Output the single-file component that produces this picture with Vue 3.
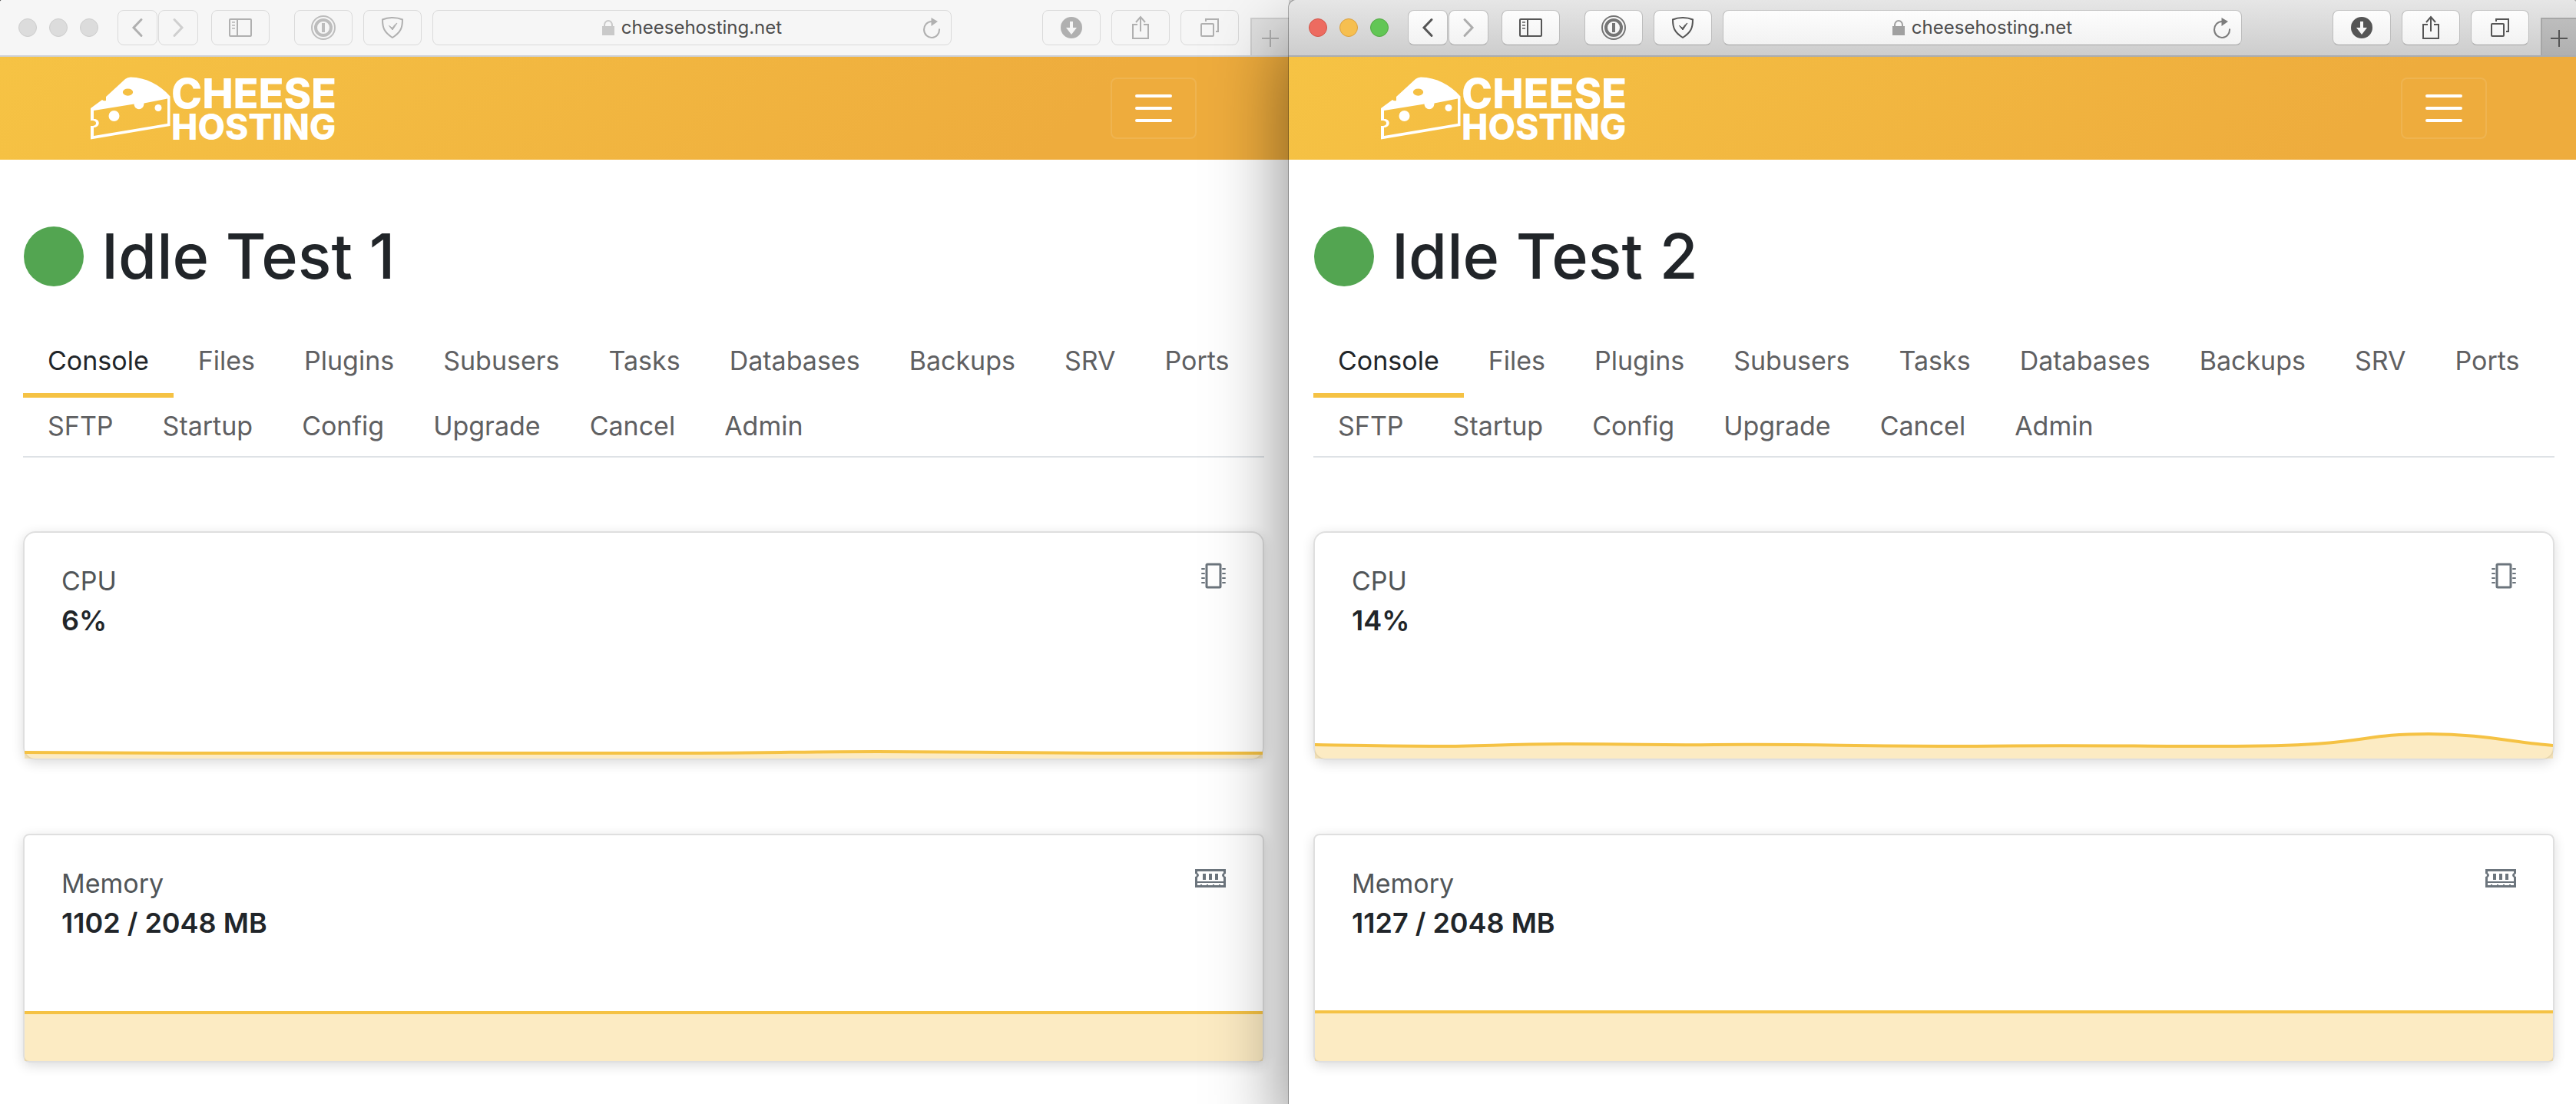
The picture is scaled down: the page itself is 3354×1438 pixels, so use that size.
<script setup>
const tabs = [
  'Console', 'Files', 'Plugins', 'Subusers', 'Tasks', 'Databases', 'Backups', 'SRV', 'Ports',
  'SFTP', 'Startup', 'Config', 'Upgrade', 'Cancel', 'Admin',
]

// Chart curves are drawn on a 1612 x 294 plot, the inside of a card
const windows = [
  {
    id: 'one',
    active: false,
    title: 'Idle Test 1',
    cpu: '6%',
    memory: '1102 / 2048 MB',
    cpuLine: 'M0 286 C60 286 120 287 200 287 H820 C960 287 1020 285 1110 285 C1220 285 1280 287 1400 287 H1612',
    memoryLine: 'M0 231 H1612',
  },
  {
    id: 'two',
    active: true,
    title: 'Idle Test 2',
    cpu: '14%',
    memory: '1127 / 2048 MB',
    cpuLine: 'M0 276 C60 277 110 278 160 278 C220 278 250 275 330 275 C430 275 440 277 520 276 C640 275 700 278 860 278 C980 276 1060 278 1180 278 C1380 278 1350 262 1450 262 C1520 262 1560 273 1612 277',
    memoryLine: 'M0 230 H1612',
  },
]
</script>

<template>
  <div class="desktop">
    <section v-for="w in windows" :key="w.id" class="window" :class="w.active ? 'front' : 'back'" :aria-label="w.title">
      <div class="toolbar">
        <div class="lights">
          <button class="light red" aria-label="Close"></button>
          <button class="light amber" aria-label="Minimise"></button>
          <button class="light green" aria-label="Zoom"></button>
        </div>
        <div class="history">
          <button class="tool narrow" aria-label="Back">
            <svg width="16" height="26" viewBox="0 0 16 26"><path d="M13 2.500 3 13l10 10.500" fill="none" stroke="currentColor" stroke-width="3" stroke-linecap="round" /></svg>
          </button>
          <button class="tool narrow forward" aria-label="Forward">
            <svg width="16" height="26" viewBox="0 0 16 26"><path d="M3 2.500 13 13 3 23.500" fill="none" stroke="currentColor" stroke-width="3" stroke-linecap="round" /></svg>
          </button>
        </div>
        <button class="tool sidebar" aria-label="Show sidebar">
          <svg width="30" height="24" viewBox="0 0 30 24" fill="none" stroke="currentColor" stroke-width="2">
            <rect x="1" y="1" width="28" height="22" rx="1" />
            <path d="M11 1v22" />
            <path d="M4 5h4M4 9h4M4 13h4" opacity=".7" />
          </svg>
        </button>
        <div class="extensions">
          <button class="tool" aria-label="Password manager">
            <svg class="keyring" width="32" height="32" viewBox="0 0 32 32" fill="none" stroke="currentColor">
              <circle cx="16" cy="16" r="15" stroke-width="2" />
              <circle cx="16" cy="16" r="10" stroke-width="4" />
              <path d="M16 10v12" stroke-width="4" />
            </svg>
          </button>
          <button class="tool" aria-label="Ad blocker">
            <svg width="28" height="28" viewBox="0 0 28 28" fill="none" stroke="currentColor" stroke-width="2">
              <path d="M14 1C9 1 5 1.800 1 3.500 1 14 3 20 14 27 25 20 27 14 27 3.500 23 1.800 19 1 14 1Z" />
              <path d="M9.500 11.500l4.500 5.500 6-9c-3 2-4.500 4-6 6.500z" fill="currentColor" stroke-width="1" />
            </svg>
          </button>
        </div>
        <div class="address">
          <a class="host" href="#">
            <svg width="16" height="20" viewBox="0 0 16 20"><path d="M3 9V6.500a5 5.500 0 0 1 10 0V9" fill="none" stroke="currentColor" stroke-width="2" /><path d="M0 8h16v12H0z" fill="currentColor" /></svg>
            <span>cheesehosting.net</span>
          </a>
          <button class="reload" aria-label="Reload">
            <svg width="24" height="28" viewBox="0 0 24 28"><path d="M22 15.500A10 10.500 0 1 1 12 6" fill="none" stroke="currentColor" stroke-width="2" /><path d="M11.500 1v11l8.500-6z" fill="currentColor" /></svg>
          </button>
        </div>
        <div class="actions">
          <button class="tool" aria-label="Downloads">
            <svg width="28" height="28" viewBox="0 0 28 28"><path d="M14 0a14 14 0 1 0 0 28 14 14 0 0 0 0-28zM12 6h4v8h5l-7 9-7-9h5z" fill="currentColor" /></svg>
          </button>
          <button class="tool" aria-label="Share">
            <svg class="share" width="24" height="32" viewBox="0 0 24 32" fill="none" stroke="currentColor" stroke-width="2"><path d="M8 12H2v18h20V12h-6M12 3v18M6 9l6-7 6 7" /></svg>
          </button>
          <button class="tool" aria-label="Show all tabs">
            <svg width="24" height="24" viewBox="0 0 24 24" fill="none" stroke="currentColor" stroke-width="2"><rect x="1" y="7" width="16" height="16" rx="1" /><path d="M7 4V1h16v16h-3" /></svg>
          </button>
        </div>
        <button class="new-tab" aria-label="New tab">
          <svg width="22" height="22" viewBox="0 0 22 22"><path d="M11 0v22M0 11h22" stroke="currentColor" stroke-width="2" /></svg>
        </button>
      </div>

      <header class="site-header">
        <a class="brand" href="#">
          <svg class="cheese" width="104" height="82" viewBox="118 100 104 82" fill="#fff">
            <path fill-rule="evenodd" d="M118 141 133 130Q135 132 138 131V126L163 103Q166 100.500 170 100.500C190 101 208 110 221.500 125.500V164L118 181.500V164H121C126.500 163.500 126.500 157.500 121 157H118ZM122 144V155C131 154.500 131 166 122 166V177L218 161V128.500L187.500 134.500C187.500 144.500 175 144.500 174.500 135.600ZM166.500 115.500a6.500 4.500 0 1 0 0 9.200 6.500 4.500 0 1 0 0-9.200Z" />
            <circle cx="148.500" cy="151" r="7" />
            <circle cx="206" cy="140.500" r="4.500" />
          </svg>
          <span class="wordmark"><span class="upper">CHEESE</span><span class="lower">HOSTING</span></span>
        </a>
        <button class="menu" aria-label="Menu"><i></i><i></i><i></i></button>
      </header>

      <main class="page">
        <h1><span class="status"></span>{{ w.title }}</h1>
        <nav class="tabs">
          <a v-for="(t, i) in tabs" :key="t" href="#" :class="{ current: i === 0 }">{{ t }}</a>
        </nav>

        <article class="card large-radius">
          <div class="card-body">
            <div>
              <p class="label">CPU</p>
              <p class="value">{{ w.cpu }}</p>
            </div>
            <svg class="icon" width="32" height="32" viewBox="0 0 32 32" fill="none" stroke="currentColor">
              <rect x="7" y="1" width="18" height="30" rx="1" stroke-width="3" />
              <path d="M1 7h3M1 13h3M1 19h3M1 25h3M28 7h3M28 13h3M28 19h3M28 25h3" stroke-width="2" stroke-linecap="round" />
            </svg>
          </div>
          <svg class="chart" viewBox="0 0 1612 294" preserveAspectRatio="none">
            <path class="area" :d="w.cpuLine + ' V294 H0 Z'" />
            <path class="line" :d="w.cpuLine" />
          </svg>
        </article>

        <article class="card">
          <div class="card-body">
            <div>
              <p class="label">Memory</p>
              <p class="value">{{ w.memory }}</p>
            </div>
            <svg class="icon" width="40" height="24" viewBox="0 0 40 24" fill="currentColor">
              <path fill-rule="evenodd" d="M0 0h40v6a2 2 0 0 0 0 4v14H0V10a2 2 0 0 0 0-4zM3 3v2q4 3 0 6v5h34v-5q-4-3 0-6V3zM3 18v3h34v-3z" />
              <path d="M10 6h4v8h-4zM18 6h4v8h-4zM26 6h4v8h-4zM7 20h2v2H7zM15 20h2v2h-2zM23 20h2v2h-2zM31 20h2v2h-2z" />
            </svg>
          </div>
          <svg class="chart" viewBox="0 0 1612 294" preserveAspectRatio="none">
            <path class="area" :d="w.memoryLine + ' V294 H0 Z'" />
            <path class="line" :d="w.memoryLine" />
          </svg>
        </article>
      </main>
    </section>
  </div>
</template>

<style>
body {
  margin: 0;
}
</style>

<style scoped>
* {
  box-sizing: border-box;
}
.desktop {
  display: grid;
  grid-template-columns: 1678fr 1676fr;
  min-height: 100vh;
  overflow: hidden;
  background: linear-gradient(90deg, #333 10%, #d4d4d4 10%);
  font-family: Inter, "Liberation Sans", sans-serif;
  color: #212529;
}
button {
  margin: 0;
  padding: 0;
  border: 0;
  background: none;
  color: inherit;
  font: inherit;
}
a {
  color: inherit;
  text-decoration: none;
}
svg {
  display: block;
  flex: none;
}
.window {
  --lead: 0px;
  --trail: 2px;
  --glyph: #b0b0b0;
  --glyph-soft: #cfcfcf;
  min-width: 0;
  background: #fff;
  border-top-left-radius: 3px;
}
.front {
  --lead: 2px;
  --trail: -2px;
  --glyph: #555;
  --glyph-soft: #adadad;
  position: relative;
  z-index: 1;
  border-radius: 10px 4px 0 0;
  box-shadow: 0 0 0 1px rgba(0, 0, 0, .3), 0 50px 100px rgba(0, 0, 0, .5);
}

/* Browser toolbar */
.toolbar {
  display: flex;
  align-items: center;
  height: 74px;
  padding-left: calc(24px + var(--lead));
  border-bottom: 2px solid #cdd0d6;
  border-top-left-radius: 3px;
  background: #f6f6f6;
  color: var(--glyph);
}
.front .toolbar {
  border-bottom-color: #a9acb1;
  border-radius: 10px 4px 0 0;
  background: linear-gradient(#e6e6e6, #cdcdcd);
}
.lights {
  display: flex;
  gap: 16px;
  margin-right: 25px;
}
.light {
  width: 24px;
  height: 24px;
  border: 1px solid #cdcdcd;
  border-radius: 50%;
  background: #dcdcdc;
}
.front .red {
  border-color: #d35549;
  background: #ed6b60;
}
.front .amber {
  border-color: #dba03e;
  background: #f6bf50;
}
.front .green {
  border-color: #52a842;
  background: #62c655;
}
.history {
  display: flex;
  gap: 1px;
  margin-right: 17px;
}
.tool {
  display: flex;
  align-items: center;
  justify-content: center;
  width: 76px;
  height: 46px;
  border: 1px solid #dadada;
  border-radius: 8px;
}
.front .tool {
  border-color: #c3c3c3 #bdbdbd #a2a2a2;
  background: linear-gradient(#fdfdfd, #f2f2f2);
}
.tool.narrow {
  width: 52px;
}
.forward {
  color: var(--glyph-soft);
}
.sidebar {
  margin-right: 32px;
}
.extensions {
  display: flex;
  gap: 14px;
  margin-right: 14px;
}
.keyring {
  opacity: .8;
}
.address {
  display: flex;
  align-items: center;
  flex: 1;
  min-width: 0;
  height: 46px;
  margin-right: 118px;
  padding: 0 13px 0 37px;
  border: 1px solid #dadada;
  border-radius: 8px;
}
.front .address {
  border-color: #c3c3c3 #bdbdbd #a2a2a2;
  background: linear-gradient(#fdfdfd, #f2f2f2);
}
.host {
  display: flex;
  align-items: center;
  justify-content: center;
  gap: 9px;
  flex: 1;
  font-size: 24px;
  line-height: 32px;
  color: #4d4d4d;
}
.host svg {
  color: #c9c9c9;
}
.front .host svg {
  color: #a0a0a0;
}
.front .reload {
  color: #7c7c7c;
}
.actions {
  display: flex;
  gap: 14px;
  margin-right: 15px;
}
.new-tab {
  display: flex;
  align-items: center;
  justify-content: center;
  align-self: flex-end;
  width: calc(48px + var(--trail));
  height: 49px;
  padding-top: 3px;
  border: solid #cfcfcf;
  border-width: 2px 0 0 2px;
  background: #e0e0e0;
}
.front .new-tab {
  border-color: #a6a6a6;
  background: linear-gradient(#bdbdbd, #b0b0b0);
}

/* Site header */
.site-header {
  display: flex;
  align-items: center;
  justify-content: space-between;
  height: 134px;
  padding: 0 calc(118px + var(--trail)) 0 calc(118px + var(--lead));
  background: linear-gradient(135deg, #f6c344, #eeac3d 82%);
}
.brand {
  display: flex;
  align-items: center;
  color: #fff;
  font-weight: 800;
}
.wordmark {
  display: flex;
  flex-direction: column;
  padding: 3px 0 0 1px;
}
.upper {
  font-size: 54px;
  line-height: 44px;
}
.lower {
  font-size: 46px;
  line-height: 42px;
}
.menu {
  display: flex;
  flex-direction: column;
  align-items: center;
  justify-content: center;
  gap: 12px;
  width: 112px;
  height: 80px;
  border: 2px solid rgba(255, 255, 255, .1);
  border-radius: 8px;
}
.menu i {
  width: 48px;
  height: 4px;
  border-radius: 2px;
  background: #fff;
}

/* Page */
.page {
  padding: 76px calc(30px + var(--trail)) 54px calc(30px + var(--lead));
}
h1 {
  display: flex;
  align-items: center;
  gap: 23px;
  margin: 0 0 47px;
  font-size: 81px;
  line-height: 100px;
  font-weight: 500;
}
.status {
  width: 78px;
  height: 78px;
  margin-left: 1px;
  border-radius: 50%;
  background: #53a551;
}
.tabs {
  display: flex;
  flex-wrap: wrap;
  row-gap: 7px;
  margin-bottom: 96px;
  border-bottom: 2px solid #dee2e6;
}
.tabs a {
  position: relative;
  padding: 15px 32px;
  font-size: 34px;
  line-height: 48px;
  font-weight: 400;
  color: #5f6062;
}
.tabs .current {
  color: #212529;
}
.tabs .current::after {
  content: "";
  position: absolute;
  right: 0;
  bottom: -9px;
  left: 0;
  height: 6px;
  background: #f5c244;
}
.card {
  position: relative;
  height: 298px;
  margin-bottom: 96px;
  border: 2px solid #dfdfdf;
  border-radius: 8px;
  box-shadow: 0 4px 16px rgba(0, 0, 0, .14);
}
.card:last-child {
  margin-bottom: 0;
}
.large-radius {
  border-radius: 16px;
}
.card-body {
  display: flex;
  justify-content: space-between;
  padding: 36px 48px 0;
}
.label,
.value {
  margin: 0;
}
.label {
  font-size: 34px;
  line-height: 54px;
  color: #515558;
}
.value {
  font-size: 36px;
  line-height: 48px;
  font-weight: 600;
}
.icon {
  height: 40px;
  color: #6c757d;
}
.chart {
  position: absolute;
  inset: 0;
  width: 100%;
  height: 100%;
}
.area {
  fill: rgba(245, 194, 68, .32);
}
.line {
  fill: none;
  stroke: #f5c244;
  stroke-width: 4;
  vector-effect: non-scaling-stroke;
}
</style>
